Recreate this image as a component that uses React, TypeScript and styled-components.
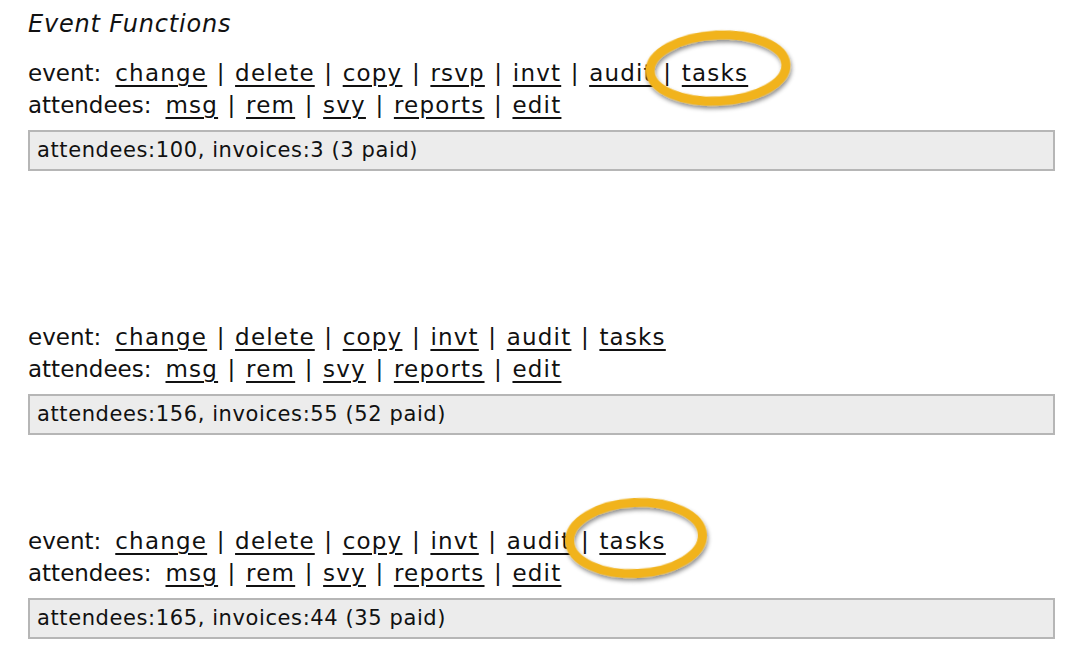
import React from "react";
import styled, { createGlobalStyle } from "styled-components";

const Global = createGlobalStyle`
  html, body { margin: 0; padding: 0; background: #ffffff; }
  body { font-family: "DejaVu Sans", Verdana, sans-serif; color: #111; }
`;

const Page = styled.div`
  position: relative;
  width: 1084px;
  height: 652px;
  padding: 8px 29px 0 28px;
  box-sizing: border-box;
  overflow: hidden;
`;

const Title = styled.div`
  font-style: italic;
  font-size: 24px;
  letter-spacing: 0.8px;
  line-height: 32px;
  height: 32px;
`;

const Block = styled.section<{ $top: number }>`
  position: relative;
  margin-top: ${(p) => p.$top}px;
`;

const Line = styled.div`
  font-size: 23px;
  letter-spacing: 1.2px;
  line-height: 32px;
  height: 32px;
  white-space: nowrap;
`;

const Label = styled.span`
  letter-spacing: 0;
  margin-right: 14px;
`;

const Link = styled.a`
  color: #111;
  text-decoration: underline;
  text-underline-offset: 4px;
  text-decoration-thickness: 2px;
`;

const Sep = styled.span`
  margin: 0 9.5px;
`;

const Stats = styled.div`
  margin-top: 9px;
  height: 41px;
  box-sizing: border-box;
  border: 2px solid #b6b6b6;
  background: #ececec;
  padding: 0 7px;
  font-size: 21px;
  letter-spacing: 0.6px;
  line-height: 37px;
`;

const Ring = styled.svg<{ $x: number; $y: number }>`
  position: absolute;
  left: ${(p) => p.$x}px;
  top: ${(p) => p.$y}px;
  width: 160px;
  height: 100px;
  overflow: visible;
  pointer-events: none;
`;

const Highlight = ({ x, y, rx, ry, id }: { x: number; y: number; rx: number; ry: number; id: string }) => (
  <Ring $x={x} $y={y} viewBox="0 0 160 100">
    <defs>
      <filter id={id} x="-20%" y="-20%" width="140%" height="150%">
        <feDropShadow dx="1" dy="3" stdDeviation="2" floodColor="#000" floodOpacity="0.45" />
      </filter>
    </defs>
    <ellipse
      cx="80"
      cy="48"
      rx={rx}
      ry={ry}
      transform="rotate(-3 80 48)"
      fill="none"
      stroke="#f1b31c"
      strokeWidth="9"
      filter={`url(#${id})`}
    />
  </Ring>
);

const LinkRow = ({ label, items }: { label: string; items: string[] }) => (
  <Line>
    <Label>{label}:</Label>
    {items.map((it, i) => (
      <React.Fragment key={it}>
        {i > 0 && <Sep>|</Sep>}
        <Link href="#">{it}</Link>
      </React.Fragment>
    ))}
  </Line>
);

const attendeeLinks = ["msg", "rem", "svy", "reports", "edit"];
const eventLinks = ["change", "delete", "copy", "invt", "audit", "tasks"];

export default function App() {
  return (
    <>
      <Global />
      <Page>
        <Title>Event Functions</Title>
        <Block $top={17}>
          <LinkRow label="event" items={["change", "delete", "copy", "rsvp", "invt", "audit", "tasks"]} />
          <LinkRow label="attendees" items={attendeeLinks} />
          <Stats>attendees:100, invoices:3 (3 paid)</Stats>
          <Highlight id="ring1" x={609.5} y={-37.5} rx={68} ry={33} />
        </Block>
        <Block $top={150}>
          <LinkRow label="event" items={eventLinks} />
          <LinkRow label="attendees" items={attendeeLinks} />
          <Stats>attendees:156, invoices:55 (52 paid)</Stats>
        </Block>
        <Block $top={90}>
          <LinkRow label="event" items={eventLinks} />
          <LinkRow label="attendees" items={attendeeLinks} />
          <Stats>attendees:165, invoices:44 (35 paid)</Stats>
          <Highlight id="ring2" x={528} y={-35} rx={66.5} ry={35.5} />
        </Block>
      </Page>
    </>
  );
}
